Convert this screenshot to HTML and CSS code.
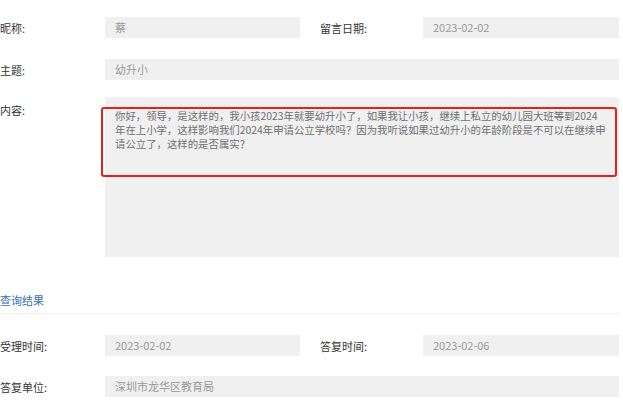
FILE: index.html
```html
<!DOCTYPE html>
<html lang="zh-CN">
<head>
    <meta charset="UTF-8">
    <meta name="viewport" content="width=device-width, initial-scale=1.0">
    <title>留言详情</title>
    <link rel="stylesheet" href="styles.css">
</head>
<body>

    <div class="detail">
        <div class="row">
            <div class="label">昵称:</div>
            <div class="value half">蔡</div>
            <div class="label label-right">留言日期:</div>
            <div class="value grow">2023-02-02</div>
        </div>

        <div class="row row-second">
            <div class="label">主题:</div>
            <div class="value grow">幼升小</div>
        </div>

        <div class="row row-content">
            <div class="label label-top">内容:</div>
            <div class="content-box">
                <p class="content-text">你好，领导，是这样的，我小孩2023年就要幼升小了，如果我让小孩，继续上私立的幼儿园大班等到2024<br>年在上小学，这样影响我们2024年申请公立学校吗？因为我听说如果过幼升小的年龄阶段是不可以在继续申<br>请公立了，这样的是否属实？</p>
                <div class="highlight"></div>
            </div>
        </div>

        <div class="section-title">查询结果</div>

        <div class="row row-result">
            <div class="label">受理时间:</div>
            <div class="value half">2023-02-02</div>
            <div class="label label-right">答复时间:</div>
            <div class="value grow">2023-02-06</div>
        </div>

        <div class="row">
            <div class="label">答复单位:</div>
            <div class="value grow">深圳市龙华区教育局</div>
        </div>
    </div>

</body>
</html>
```

FILE: styles.css
```css
body {
    font-family: "Noto Sans CJK SC", "Noto Sans", sans-serif;
    font-size: 11px;
    background-color: #fff;
    color: #333;
    margin: 0;
    padding: 0;
}

.detail {
    width: 619px;
    padding-top: 17px;
}

.row {
    display: flex;
    align-items: center;
    margin-bottom: 20px;
}

.row:first-child {
    margin-bottom: 21px;
}

.row-second {
    margin-bottom: 17px;
}

.label {
    width: 105px;
    flex-shrink: 0;
    color: #333;
    line-height: 16px;
}

.label-right {
    width: 103px;
    margin-left: 20px;
}

.label-top {
    align-self: flex-start;
    padding-top: 5px;
}

.value {
    height: 21px;
    line-height: 21px;
    padding: 0 10px;
    background-color: #f0f0f0;
    color: #999;
    box-sizing: border-box;
}

.half {
    width: 195px;
}

.grow {
    flex: 1;
}

.row-content {
    margin-bottom: 35px;
}

.content-box {
    position: relative;
    flex: 1;
    height: 160px;
    background-color: #f0f0f0;
    box-sizing: border-box;
    padding: 12px 10px 0;
}

.content-text {
    margin: 0;
    font-size: 10.4px;
    line-height: 14px;
    color: #6f6f6f;
    white-space: nowrap;
}

/* red annotation frame drawn over the message */
.highlight {
    position: absolute;
    left: -4px;
    top: 10px;
    width: 516px;
    height: 70px;
    border: 2px solid #e8201a;
    border-radius: 3px;
    box-sizing: border-box;
}

.section-title {
    color: #3a6fb3;
    line-height: 16px;
    padding-bottom: 5px;
    border-bottom: 1px solid #f3f3f3;
    margin-bottom: 21px;
}
```
